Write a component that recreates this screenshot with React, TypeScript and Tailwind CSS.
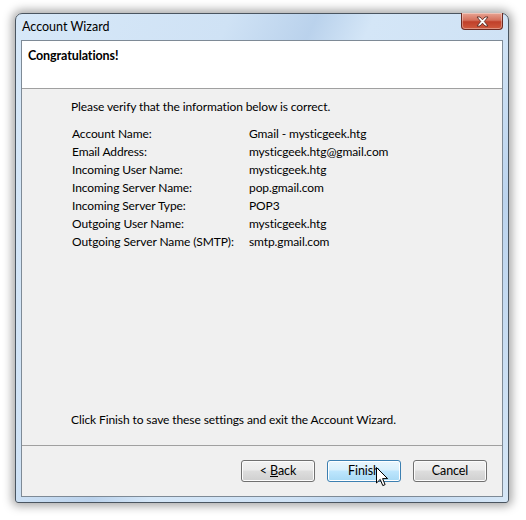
import { useState } from 'react'

const DETAILS: [string, string][] = [
  ['Account Name:', 'Gmail - mysticgeek.htg'],
  ['Email Address:', 'mysticgeek.htg@gmail.com'],
  ['Incoming User Name:', 'mysticgeek.htg'],
  ['Incoming Server Name:', 'pop.gmail.com'],
  ['Incoming Server Type:', 'POP3'],
  ['Outgoing User Name:', 'mysticgeek.htg'],
  ['Outgoing Server Name (SMTP):', 'smtp.gmail.com'],
]

function WinButton({ children, hot = false }: { children: React.ReactNode; hot?: boolean }) {
  return (
    <button
      className={
        hot
          ? 'w-[74px] h-[22px] rounded-[3px] border border-[#3c7fb1] bg-[linear-gradient(#eaf6fd_0%,#d9f0fc_45%,#bee6fd_50%,#a7d9f5_100%)] text-[12.5px] text-black flex items-center justify-center shadow-[inset_0_0_0_1px_#fff]'
          : 'w-[74px] h-[22px] rounded-[3px] border border-[#707070] bg-[linear-gradient(#f2f2f2_0%,#ebebeb_45%,#dddddd_50%,#cfcfcf_100%)] text-[12.5px] text-black flex items-center justify-center shadow-[inset_0_0_0_1px_#fcfcfc]'
      }
    >
      {children}
    </button>
  )
}

function Cursor() {
  return (
    <svg width="13" height="20" viewBox="0 0 13 20" className="absolute left-[376px] top-[467px]">
      <path
        d="M0.5 0.5 L0.5 16 L4.2 12.4 L6.8 18.6 L9.1 17.6 L6.6 11.6 L11.6 11.6 Z"
        fill="#fff"
        stroke="#000"
        strokeWidth="1"
        strokeLinejoin="round"
      />
    </svg>
  )
}

export default function App() {
  const [open] = useState(true)
  if (!open) return null

  return (
    <div
      className="relative w-[526px] h-[520px] bg-white pl-[15px] pt-[13px]"
      style={{ fontFamily: 'Lato, "Noto Sans", sans-serif' }}
    >
      {/* window frame */}
      <div className="w-[494px] h-[490px] rounded-t-[7px] rounded-b-[3px] border border-[#4a5560] bg-[linear-gradient(115deg,#d7e8f8_0%,#cfe2f5_30%,#bad2ec_42%,#d4e6f7_50%,#cfe2f5_70%,#bcd4ee_80%,#d6e7f7_100%)] shadow-[0_0_10px_3px_rgba(0,0,0,0.35)] flex flex-col px-[5px] pb-[5px]">
        {/* title bar */}
        <div className="h-[26px] flex items-start justify-between">
          <span className="text-[12.5px] text-black pl-[1px] pt-[7px] leading-none">Account Wizard</span>
          <div className="w-[42px] h-[17px] -mt-px rounded-b-[4px] border border-[#6b2a22] border-t-0 bg-[linear-gradient(#e8a493_0%,#d4705c_45%,#c0402a_55%,#d05a3e_100%)] flex items-center justify-center shadow-[inset_0_0_0_1px_rgba(255,255,255,0.35)]">
            <svg width="13" height="11" viewBox="0 0 13 11">
              <path
                d="M1 1 L4 1 L6.5 3.8 L9 1 L12 1 L8.3 5.5 L12 10 L9 10 L6.5 7.2 L4 10 L1 10 L4.7 5.5 Z"
                fill="#fff"
                stroke="#5a2a22"
                strokeWidth="0.9"
                strokeLinejoin="round"
              />
            </svg>
          </div>
        </div>

        {/* client area */}
        <div className="flex-1 border border-[#7e8a96] bg-[#f0f0f0] flex flex-col text-[12px] tracking-[-0.1px] text-black">
          <div className="h-[48px] bg-white border-b border-[#a0a0a0] px-[6px] pt-[6px]">
            <span className="font-bold leading-[16px] text-[12.5px]">Congratulations!</span>
          </div>

          <div className="flex-1 flex flex-col pl-[49px] pt-[10px]">
            <p className="leading-[16px]">Please verify that the information below is correct.</p>
            <div className="mt-[10px] flex flex-col">
              {DETAILS.map(([label, value]) => (
                <div key={label} className="flex h-[18px] items-center pl-[1px]">
                  <span className="w-[177px]">{label}</span>
                  <span>{value}</span>
                </div>
              ))}
            </div>
            <p className="mt-auto mb-[17px] leading-[16px]">
              Click Finish to save these settings and exit the Account Wizard.
            </p>
          </div>

          <div className="h-[51px] border-t border-[#a0a0a0] flex justify-end items-start pt-[14px] pr-[15px] gap-[12px]">
            <WinButton>
              &lt;&nbsp;<span className="underline">B</span>ack
            </WinButton>
            <WinButton hot>Finish</WinButton>
            <WinButton>Cancel</WinButton>
          </div>
        </div>
      </div>
      <Cursor />
    </div>
  )
}
